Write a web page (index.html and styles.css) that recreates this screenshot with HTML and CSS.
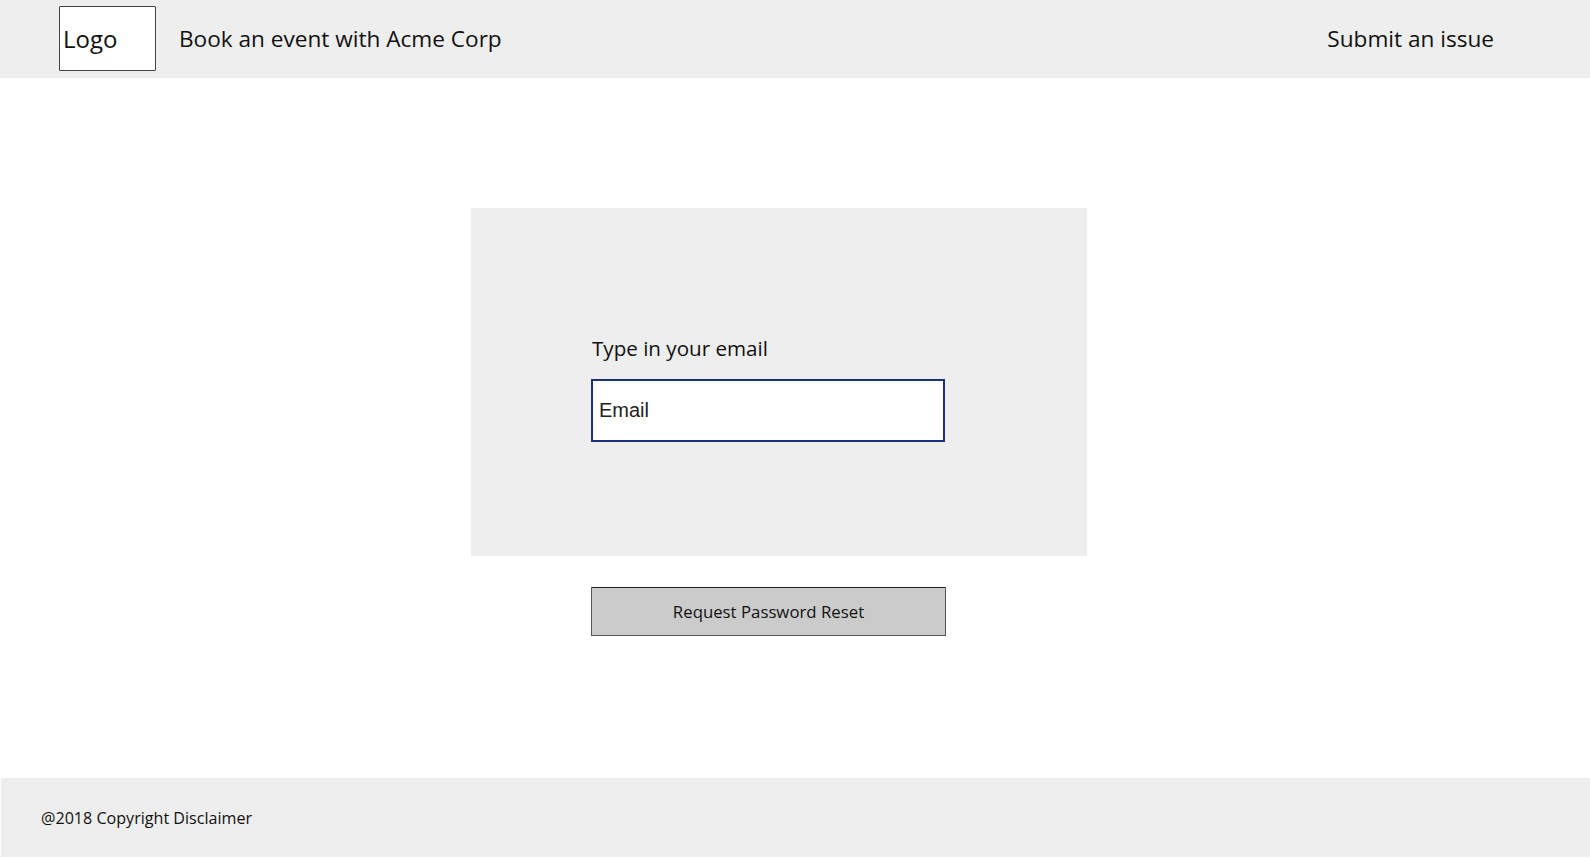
FILE: index.html
```html
<!DOCTYPE html>
<html>
<head>
  <title>Request Password Reset</title>
  <link rel="stylesheet" href="styles.css">
</head>
<body>
  <header class="topbar">
    <div class="logo">Logo</div>
    <div class="site-title">Book an event with Acme Corp</div>
    <a class="issue-link">Submit an issue</a>
  </header>

  <main class="content">
    <div class="card">
      <label class="email-label" for="email">Type in your email</label>
      <input class="email-input" id="email" type="text" placeholder="Email">
    </div>
    <button class="reset-btn">Request Password Reset</button>
  </main>

  <footer class="footer">@2018 Copyright Disclaimer</footer>
</body>
</html>
```

FILE: styles.css
```css
body {
  margin: 0;
  padding: 0;
  background: white;
  color: #111;
  font-family: "Comic Sans MS", "Open Sans", "DejaVu Sans", sans-serif;
}

.topbar {
  height: 78px;
  box-sizing: border-box;
  padding: 6px 96px 7px 59px;
  background: #eeeeee;
  display: flex;
  align-items: center;
  font-size: 22.6px;
}

.logo {
  width: 97px;
  height: 65px;
  box-sizing: border-box;
  padding: 16px 0 0 3px;
  background: white;
  border: 1px solid #444;
  border-radius: 1px;
  font-size: 24px;
  line-height: 32px;
}

.site-title {
  margin-left: 23px;
}

.issue-link {
  margin-left: auto;
}

.content {
  height: 700px;
  box-sizing: border-box;
  padding: 130px 0 0 471px;
}

.card {
  width: 616px;
  height: 348px;
  box-sizing: border-box;
  padding: 125px 0 0 121px;
  background: #eeeeee;
}

.email-label {
  display: block;
  font-size: 20.6px;
  line-height: 30px;
  margin: 0 0 16px 0;
}

.email-input {
  display: block;
  width: 354px;
  height: 63px;
  margin-left: -1px;
  box-sizing: border-box;
  padding: 0 6px;
  border: 2px solid #1a2f80;
  background: white;
  font-family: "Liberation Sans", sans-serif;
  font-size: 20px;
  outline: none;
}

.email-input::placeholder {
  color: #222;
  opacity: 1;
}

.reset-btn {
  display: block;
  width: 355px;
  height: 49px;
  margin: 31px 0 0 120px;
  background: #cbcbcb;
  color: #111;
  border: 1px solid #555;
  border-top-color: #222;
  border-radius: 1px;
  font-family: inherit;
  font-size: 16.8px;
}

.footer {
  height: 79px;
  margin-left: 1px;
  box-sizing: border-box;
  padding: 27px 0 0 40px;
  background: #eeeeee;
  font-size: 16.1px;
  line-height: 26px;
}
```
